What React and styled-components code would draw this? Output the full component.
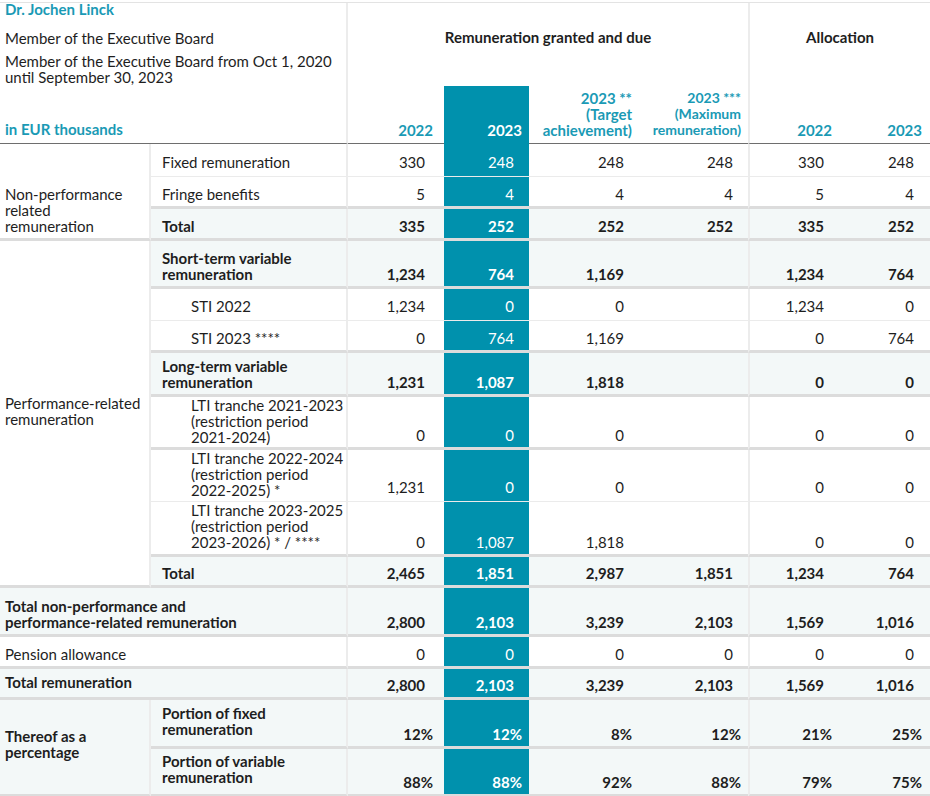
import React from "react";
import styled, { createGlobalStyle } from "styled-components";

const TEAL = "#0091ad";
const TEAL_TEXT = "#1a9ab5";
const SHADE = "#f3f8f8";
const THICK = "3px solid #dcdcdc";
const THIN = "1px solid #ebebeb";
const VLINE = "2px solid #ececec";
const HEAD_LINE = "1px solid #6e6e6e";

// right padding per value column (header / percent values); numbers get extra
const PAD = [11, 7, 8, 7, 8, 8];
const NUM_EXTRA = 8;
const WIDTHS = [151, 197, 96, 85, 111, 108, 92, 90];

const GlobalStyle = createGlobalStyle`
  body {
    margin: 0;
    background: #fff;
    font-family: Lato, "Liberation Sans", sans-serif;
    color: #1e1e1e;
  }
`;

const Page = styled.div`
  width: 930px;
  padding-top: 2px;
`;

const Table = styled.table`
  width: 930px;
  table-layout: fixed;
  border-collapse: separate;
  border-spacing: 0;
  border-top: 1px solid #e3e3e3;
  font-size: 15px;
  line-height: 16px;
`;

const IntroCell = styled.td`
  vertical-align: top;
  padding: 0 0 0 5px;
  border-right: ${VLINE};
  border-bottom: ${HEAD_LINE};
`;

const Intro = styled.div`
  display: flex;
  flex-direction: column;
  height: 138px;
`;

const IntroTitle = styled.div`
  color: ${TEAL_TEXT};
  font-weight: 700;
  white-space: nowrap;
`;

const IntroLine = styled.div`
  margin-top: ${(p) => p.$gap}px;
  white-space: nowrap;
`;

const Unit = styled(IntroTitle)`
  margin-top: auto;
  padding-bottom: 4px;
`;

const GroupCell = styled.td`
  height: 56px;
  vertical-align: top;
  text-align: center;
  font-weight: 700;
  padding-top: 26px;
  border-left: ${(p) => (p.$line ? VLINE : "none")};
`;

const YearCell = styled.td`
  height: 52px;
  vertical-align: bottom;
  text-align: right;
  font-weight: 700;
  font-size: ${(p) => p.$size || 15}px;
  line-height: 16px;
  color: ${(p) => (p.$hl ? "#fff" : TEAL_TEXT)};
  background: ${(p) => (p.$hl ? TEAL : "transparent")};
  padding: 0 ${(p) => p.$pad}px 5px 0;
  border-bottom: ${(p) => (p.$hl ? `1px solid ${TEAL}` : HEAD_LINE)};
  border-left: ${(p) => (p.$line ? VLINE : "none")};
  white-space: nowrap;
`;

const Row = styled.tr`
  height: ${(p) => p.$h}px;
`;

const CategoryCell = styled.td`
  vertical-align: ${(p) => p.$valign};
  padding: 0 4px ${(p) => p.$pb}px 5px;
  background: ${(p) => (p.$shade ? SHADE : "#fff")};
  font-weight: ${(p) => (p.$bold ? 700 : 400)};
  border-right: ${VLINE};
  border-bottom: ${THICK};
  white-space: nowrap;
`;

const LabelCell = styled.td`
  vertical-align: bottom;
  padding: 0 4px ${(p) => p.$pb}px ${(p) => p.$indent}px;
  background: ${(p) => (p.$shade ? SHADE : "#fff")};
  font-weight: ${(p) => (p.$bold ? 700 : 400)};
  border-right: ${VLINE};
  border-bottom: ${(p) => (p.$thin ? THIN : THICK)};
  white-space: nowrap;
`;

const ValueCell = styled.td`
  vertical-align: bottom;
  text-align: right;
  padding: 0 ${(p) => p.$pad}px ${(p) => (p.$thin ? 6 : 4)}px 0;
  background: ${(p) => (p.$hl ? TEAL : p.$shade ? SHADE : "#fff")};
  color: ${(p) => (p.$hl ? "#fff" : "#1e1e1e")};
  font-weight: ${(p) => (p.$bold ? 700 : 400)};
  border-bottom: ${(p) => (p.$thin ? THIN : THICK)};
  border-left: ${(p) => (p.$line ? VLINE : "none")};
  white-space: nowrap;
`;

const lines = (text) =>
  text.split("\n").map((t, i) => (
    <React.Fragment key={i}>
      {i > 0 && <br />}
      {t}
    </React.Fragment>
  ));

const rows = [
  {
    h: 33, thin: true, label: "Fixed remuneration",
    cat: { text: "Non-performance\nrelated\nremuneration", span: 3, valign: "bottom", pb: 4 },
    vals: ["330", "248", "248", "248", "330", "248"],
  },
  { h: 32, label: "Fringe benefits", vals: ["5", "4", "4", "4", "5", "4"] },
  { h: 32, label: "Total", bold: true, shade: true, vals: ["335", "252", "252", "252", "335", "252"] },
  {
    h: 48, label: "Short-term variable\nremuneration", bold: true, shade: true,
    cat: { text: "Performance-related\nremuneration", span: 8, valign: "middle", pb: 4 },
    vals: ["1,234", "764", "1,169", "", "1,234", "764"],
  },
  { h: 32, thin: true, label: "STI 2022", indent: true, vals: ["1,234", "0", "0", "", "1,234", "0"] },
  { h: 32, label: "STI 2023 ****", indent: true, vals: ["0", "764", "1,169", "", "0", "764"] },
  {
    h: 44, label: "Long-term variable\nremuneration", bold: true, shade: true,
    vals: ["1,231", "1,087", "1,818", "", "0", "0"],
  },
  {
    h: 53, label: "LTI tranche 2021-2023\n(restriction period\n2021-2024)", indent: true, pb: 2,
    vals: ["0", "0", "0", "", "0", "0"],
  },
  {
    h: 52, thin: true, label: "LTI tranche 2022-2024\n(restriction period\n2022-2025) *", indent: true, pb: 3,
    vals: ["1,231", "0", "0", "", "0", "0"],
  },
  {
    h: 55, label: "LTI tranche 2023-2025\n(restriction period\n2023-2026) * / ****", indent: true, pb: 4,
    vals: ["0", "1,087", "1,818", "", "0", "0"],
  },
  { h: 31, label: "Total", bold: true, shade: true, vals: ["2,465", "1,851", "2,987", "1,851", "1,234", "764"] },
  {
    h: 49, wide: true, label: "Total non-performance and\nperformance-related remuneration", bold: true, shade: true,
    vals: ["2,800", "2,103", "3,239", "2,103", "1,569", "1,016"],
  },
  { h: 32, wide: true, label: "Pension allowance", vals: ["0", "0", "0", "0", "0", "0"] },
  {
    h: 31, wide: true, label: "Total remuneration", bold: true, shade: true, pb: 7,
    vals: ["2,800", "2,103", "3,239", "2,103", "1,569", "1,016"],
  },
  {
    h: 49, label: "Portion of fixed\nremuneration", bold: true, shade: true, pb: 9, pct: true,
    cat: { text: "Thereof as a\npercentage", span: 2, valign: "middle", bold: true, shade: true, pb: 6 },
    vals: ["12%", "12%", "8%", "12%", "21%", "25%"],
  },
  {
    h: 48, label: "Portion of variable\nremuneration", bold: true, shade: true, pb: 9, pct: true,
    vals: ["88%", "88%", "92%", "88%", "79%", "75%"],
  },
];

function BodyRow({ row }) {
  return (
    <Row $h={row.h}>
      {row.cat && (
        <CategoryCell
          rowSpan={row.cat.span}
          $valign={row.cat.valign}
          $pb={row.cat.pb}
          $bold={row.cat.bold}
          $shade={row.cat.shade}
        >
          {lines(row.cat.text)}
        </CategoryCell>
      )}
      <LabelCell
        colSpan={row.wide ? 2 : 1}
        $indent={row.wide ? 5 : row.indent ? 40 : 11}
        $pb={row.pb ?? (row.thin ? 6 : 4)}
        $bold={row.bold}
        $shade={row.shade}
        $thin={row.thin}
      >
        {lines(row.label)}
      </LabelCell>
      {row.vals.map((v, i) => (
        <ValueCell
          key={i}
          $pad={PAD[i] + (row.pct ? 0 : NUM_EXTRA)}
          $hl={i === 1}
          $line={i === 4}
          $bold={row.bold}
          $shade={row.shade}
          $thin={row.thin}
        >
          {v}
        </ValueCell>
      ))}
    </Row>
  );
}

export default function App() {
  return (
    <Page>
      <GlobalStyle />
      <Table>
        <colgroup>
          {WIDTHS.map((w, i) => (
            <col key={i} style={{ width: w }} />
          ))}
        </colgroup>
        <thead>
          <tr>
            <IntroCell colSpan={2} rowSpan={2}>
              <Intro>
                <IntroTitle style={{ marginTop: -2 }}>Dr. Jochen Linck</IntroTitle>
                <IntroLine $gap={13}>Member of the Executive Board</IntroLine>
                <IntroLine $gap={7}>
                  Member of the Executive Board from Oct 1, 2020
                  <br />
                  until September 30, 2023
                </IntroLine>
                <Unit>in EUR thousands</Unit>
              </Intro>
            </IntroCell>
            <GroupCell colSpan={4}>Remuneration granted and due</GroupCell>
            <GroupCell colSpan={2} $line>
              Allocation
            </GroupCell>
          </tr>
          <tr>
            <YearCell $pad={PAD[0]}>2022</YearCell>
            <YearCell $pad={PAD[1]} $hl>
              2023
            </YearCell>
            <YearCell $pad={PAD[2]}>{lines("2023 **\n(Target\nachievement)")}</YearCell>
            <YearCell $pad={PAD[3]} $size={14}>
              {lines("2023 ***\n(Maximum\nremuneration)")}
            </YearCell>
            <YearCell $pad={PAD[4]} $line>
              2022
            </YearCell>
            <YearCell $pad={PAD[5]}>2023</YearCell>
          </tr>
        </thead>
        <tbody>
          {rows.map((row, i) => (
            <BodyRow key={i} row={row} />
          ))}
        </tbody>
      </Table>
    </Page>
  );
}
